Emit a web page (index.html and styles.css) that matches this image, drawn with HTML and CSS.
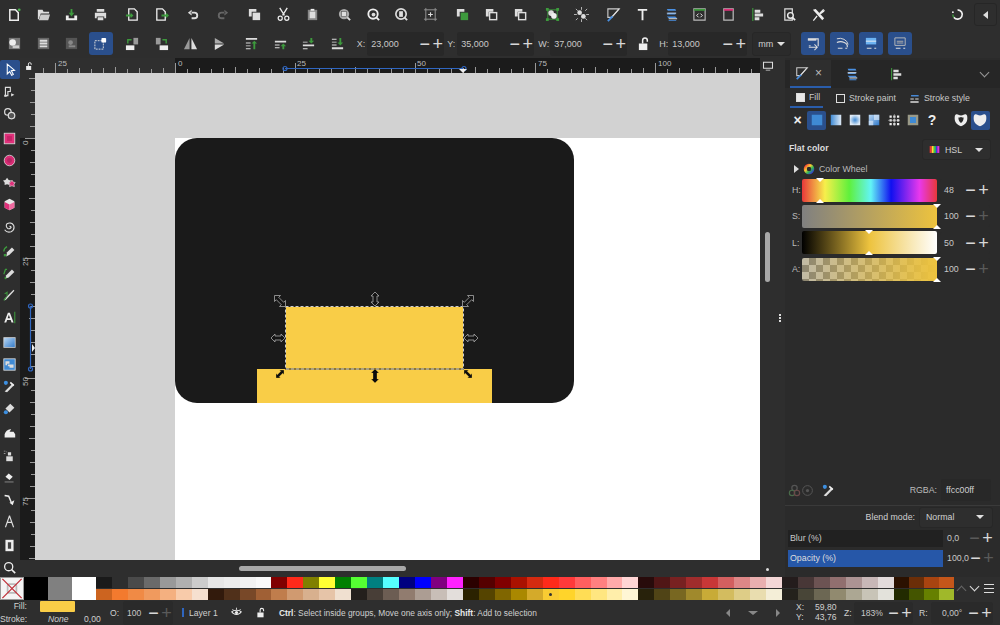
FILE: index.html
```html
<!DOCTYPE html>
<html lang="en">
<head>
<meta charset="utf-8">
<title>Inkscape</title>
<link rel="stylesheet" href="styles.css">
</head>
<body>
<svg class="sprite" width="0" height="0">
<defs>
<symbol id="new" viewBox="0 0 16 16"><path d="M3 3h6l3 3v8H3z" fill="none" stroke="#eee" stroke-width="1.6"/><circle cx="13" cy="3" r="1.5" fill="#4caf50"/></symbol>
<symbol id="open" viewBox="0 0 16 16"><path d="M2 3h5l1 2h6v2H5L3 13H2z" fill="#ddd"/><path d="M5 8h10l-2 6H3z" fill="#ccc"/></symbol>
<symbol id="save" viewBox="0 0 16 16"><path d="M2 9h3v3h6V9h3v5H2z" fill="#eee"/><path d="M7 2h2v4h2L8 10 5 6h2z" fill="#3d9a3d"/></symbol>
<symbol id="print" viewBox="0 0 16 16"><path d="M4 2h8v3H4zM2 6h12v6h-2v-2H4v2H2zM5 11h6v3H5z" fill="#ddd"/></symbol>
<symbol id="import" viewBox="0 0 16 16"><path d="M4 2h6l3 3v9H4z" fill="none" stroke="#eee" stroke-width="1.4"/><path d="M1 8h5V6l3 3-3 3v-2H1z" fill="#3d9a3d"/></symbol>
<symbol id="export" viewBox="0 0 16 16"><path d="M3 2h6l3 3v9H3z" fill="none" stroke="#eee" stroke-width="1.4"/><path d="M8 8h5V6l3 3-3 3v-2H8z" fill="#3d9a3d"/></symbol>
<symbol id="undo" viewBox="0 0 16 16"><path d="M6 3 2 6l4 3zM5 5h4a3.500 3.500 0 0 1 0 8H6v-2h3a1.500 1.500 0 0 0 0-4H5z" fill="#ddd"/></symbol>
<symbol id="redo" viewBox="0 0 16 16"><path d="M10 3l4 3-4 3zM11 5H7a3.500 3.500 0 0 0 0 8h3v-2H7a1.500 1.500 0 0 1 0-4h4z" fill="#666"/></symbol>
<symbol id="copy" viewBox="0 0 16 16"><path d="M2 2h8v3H5v5H2z" fill="#ddd"/><rect x="6" y="6" width="8" height="8" fill="#ddd"/></symbol>
<symbol id="cut" viewBox="0 0 16 16"><path d="M4 1l5 8M12 1 7 9" stroke="#eee" stroke-width="1.4" fill="none"/><circle cx="4.500" cy="12" r="2.200" fill="none" stroke="#eee" stroke-width="1.3"/><circle cx="11.500" cy="12" r="2.200" fill="none" stroke="#eee" stroke-width="1.3"/></symbol>
<symbol id="paste" viewBox="0 0 16 16"><path d="M3 3h10v11H3z" fill="#888"/><path d="M6 2h4v2H6z" fill="#eee"/><path d="M5 5h6v7H5z" fill="#ddd"/></symbol>
<symbol id="zoomsel" viewBox="0 0 16 16"><circle cx="7.500" cy="7.500" r="5.500" fill="#aaa"/><rect x="5" y="5" width="5" height="5" fill="#ddd" stroke="#555" stroke-width=".6"/><path d="M11 11l3 3" stroke="#ddd" stroke-width="2"/></symbol>
<symbol id="zoomdraw" viewBox="0 0 16 16"><circle cx="7.500" cy="7.500" r="5" fill="none" stroke="#eee" stroke-width="2"/><path d="M11 11l3 3" stroke="#eee" stroke-width="2"/><circle cx="8" cy="8" r="2" fill="#ddd"/></symbol>
<symbol id="zoompage" viewBox="0 0 16 16"><circle cx="7.500" cy="7.500" r="5.500" fill="none" stroke="#ddd" stroke-width="1.800"/><rect x="5.500" y="4.500" width="4" height="6" fill="#ddd"/><path d="M11 11l3 3" stroke="#ddd" stroke-width="2"/></symbol>
<symbol id="center" viewBox="0 0 16 16"><path d="M3 3h10v10H3z" fill="none" stroke="#999" stroke-width="1"/><path d="M8 5.500v5M5.500 8h5" stroke="#ddd" stroke-width="1.200"/><path d="M1 3h2M3 1v2M13 1v2M15 3h-2M1 13h2M3 15v-2M15 13h-2M13 15v-2" stroke="#aaa" stroke-width=".8"/></symbol>
<symbol id="dup" viewBox="0 0 16 16"><path d="M2 2h8v3H5v5H2z" fill="#ddd"/><rect x="6" y="6" width="8" height="8" fill="#3d9a3d"/></symbol>
<symbol id="clone" viewBox="0 0 16 16"><path d="M2 2h8v3H5v5H2z" fill="#ddd"/><rect x="6" y="6" width="7.500" height="7.500" fill="none" stroke="#ddd" stroke-width="1.500"/></symbol>
<symbol id="group" viewBox="0 0 16 16"><path d="M3 3h10v10H3z" fill="none" stroke="#3d9a3d" stroke-width="1"/><circle cx="6.500" cy="6.500" r="3" fill="#ddd"/><circle cx="9.500" cy="9.500" r="3" fill="#eee"/><path d="M1 1h3v3H1zM12 1h3v3h-3zM1 12h3v3H1zM12 12h3v3h-3z" fill="#3d9a3d"/></symbol>
<symbol id="ungroup" viewBox="0 0 16 16"><circle cx="6" cy="6" r="2.500" fill="#ddd"/><circle cx="10" cy="10" r="2.500" fill="#ddd"/><path d="M8 0v3M8 13v3M0 8h3M13 8h3M2 2l2 2M14 2l-2 2M2 14l2-2M14 14l-2-2" stroke="#bbb" stroke-width="1"/></symbol>
<symbol id="fillstroke" viewBox="0 0 16 16"><path d="M2 2h12l-1 1-7 8H2z" fill="none" stroke="#ccc" stroke-width="1.200"/><path d="M6 11 14 2" stroke="#ddd" stroke-width="1.200"/><path d="M2 15l5-5" stroke="#4a90e2" stroke-width="2"/></symbol>
<symbol id="text" viewBox="0 0 16 16"><path d="M3 2h10v2H9v10H7V4H3z" fill="#eee"/></symbol>
<symbol id="layers" viewBox="0 0 16 16"><path d="M3 2h9l1 2H4zM4 6h9l-1 2H3zM3 10h9l2 2H5zM5 14h8v1H5z" fill="#4a90e2"/><path d="M3 6h10v1H3zM5 12h9v1H5z" fill="#ddd"/></symbol>
<symbol id="xml" viewBox="0 0 16 16"><path d="M2 2h12v12H2z" fill="none" stroke="#bbb" stroke-width="1.200"/><path d="M2 2h12v2H2z" fill="#3d9a3d"/><path d="M7 7 5 9l2 2M9 7l2 2-2 2" fill="none" stroke="#eee" stroke-width="1"/></symbol>
<symbol id="docprop" viewBox="0 0 16 16"><path d="M3 2h10v12H3z" fill="none" stroke="#bbb" stroke-width="1.300"/><path d="M3 2h10v2H3z" fill="#e0307a"/></symbol>
<symbol id="align" viewBox="0 0 16 16"><path d="M3 1v14" stroke="#3d9a3d" stroke-width="1.200"/><path d="M5 3h6v3H5zM5 7h9v3H5zM5 11h5v3H5z" fill="#ddd"/></symbol>
<symbol id="search" viewBox="0 0 16 16"><path d="M3 2h8v12H3z" fill="none" stroke="#ddd" stroke-width="1.300"/><circle cx="9" cy="9" r="3" fill="#333" stroke="#eee" stroke-width="1.500"/><path d="M11 11l3 3" stroke="#eee" stroke-width="1.800"/></symbol>
<symbol id="prefs" viewBox="0 0 16 16"><path d="M2 3l3-1 9 10-2 2zM14 3l-1-1-4 4 1 2 4-3 1-2-2 1zM2 14l4-5 1 1-4 5z" fill="#eee"/></symbol>
<symbol id="sync" viewBox="0 0 16 16"><path d="M7 3a5 5 0 1 1-4 8" fill="none" stroke="#eee" stroke-width="1.800"/><path d="M3 11a5 5 0 0 1-1-3" fill="none" stroke="#3d9a3d" stroke-width="1.500"/><circle cx="2" cy="5.500" r="1" fill="#eee"/></symbol>
<symbol id="selall" viewBox="0 0 16 16"><rect x="2" y="2" width="12" height="12" fill="#777"/><circle cx="6" cy="7" r="3.500" fill="#eee"/><path d="M6 10h7v3H6z" fill="#ccc"/></symbol>
<symbol id="sellayers" viewBox="0 0 16 16"><rect x="2" y="2" width="12" height="12" fill="#666"/><path d="M4 4h8v2H4zM4 7h8v2H4zM4 10h8v2H4z" fill="#ddd"/></symbol>
<symbol id="desel" viewBox="0 0 16 16"><rect x="2" y="2" width="12" height="12" fill="#555"/><circle cx="7" cy="7" r="2.500" fill="#888"/><path d="M5 10h7v2H5z" fill="#888"/></symbol>
<symbol id="tf" viewBox="0 0 16 16"><path d="M2 5h9v9H2z" fill="none" stroke="#ddd" stroke-width="1" stroke-dasharray="2 1"/><rect x="9" y="2" width="5" height="5" rx="1" fill="#fff"/></symbol>
<symbol id="rotl" viewBox="0 0 16 16"><rect x="1" y="10" width="9" height="5" fill="#eee"/><rect x="9" y="2" width="5" height="7" fill="#999"/><path d="M7 4H3v4" stroke="#3d9a3d" stroke-width="1.500" fill="none"/></symbol>
<symbol id="rotr" viewBox="0 0 16 16"><rect x="6" y="10" width="9" height="5" fill="#eee"/><rect x="2" y="2" width="5" height="7" fill="#999"/><path d="M9 4h4v4" stroke="#3d9a3d" stroke-width="1.500" fill="none"/></symbol>
<symbol id="fliph" viewBox="0 0 16 16"><path d="M7 2v12H1z" fill="#999"/><path d="M9 2v12h6z" fill="#ddd"/></symbol>
<symbol id="flipv" viewBox="0 0 16 16"><path d="M3 2l10 6H3z" fill="#aaa"/><path d="M3 9h10L3 15z" fill="#ddd"/></symbol>
<symbol id="top" viewBox="0 0 16 16"><path d="M2 2h12v2H2zM2 7h5v1H2zM2 10h5v1H2zM2 13h5v1H2z" fill="#ddd"/><path d="M11 5l3 3h-2v6h-2V8H8z" fill="#3d9a3d"/></symbol>
<symbol id="up" viewBox="0 0 16 16"><path d="M2 5h12v2H2zM2 9h5v1H2zM2 12h5v1H2z" fill="#ddd"/><path d="M11 8l3 3h-2v3h-2v-3H8z" fill="#3d9a3d"/></symbol>
<symbol id="down" viewBox="0 0 16 16"><path d="M2 9h12v2H2zM2 6h5v1H2zM2 13h5v1H2z" fill="#ddd"/><path d="M10 2h2v3h2l-3 3-3-3h2z" fill="#3d9a3d"/></symbol>
<symbol id="bottom" viewBox="0 0 16 16"><path d="M2 12h12v2H2zM2 3h5v1H2zM2 6h5v1H2zM2 9h5v1H2z" fill="#ddd"/><path d="M10 2h2v5h2l-3 3-3-3h2z" fill="#3d9a3d"/></symbol>
<symbol id="strokestyle" viewBox="0 0 16 16"><path d="M3 3h11v2H3z" fill="#4a90e2"/><path d="M2 8h5v1.500H2zM9 8h5v1.500H9zM2 12h12v2H2z" fill="#ddd"/></symbol>
<symbol id="lockopen" viewBox="0 0 16 16"><rect x="2" y="8" width="9" height="7" fill="#eee"/><path d="M6 8V4.500a2.500 2.500 0 0 1 5 0V6" fill="none" stroke="#eee" stroke-width="1.600"/></symbol>
<symbol id="opt" viewBox="0 0 16 16"><path d="M2 3h11v8" fill="none" stroke="#ddd" stroke-width="1.200"/><path d="M2 3h9v2H2z" fill="#ddd"/><path d="M3 12h9M9 9l3 3-3 3" fill="none" stroke="#ddd" stroke-width="1.100"/><path d="M3 10h2v1H3z" fill="#ddd"/></symbol>
<symbol id="opt2" viewBox="0 0 16 16"><path d="M2 7a7 5 0 0 1 11 5" fill="none" stroke="#ddd" stroke-width="1.200"/><path d="M2 3a9 8 0 0 1 12 6" fill="none" stroke="#ddd" stroke-width="1"/><path d="M3 13h5M11 13h2" stroke="#ddd" stroke-width="1.200"/></symbol>
<symbol id="opt3" viewBox="0 0 16 16"><path d="M2 2h11v7H2z" fill="#6db3f2"/><path d="M2 5h11v1H2z" fill="#eee"/><path d="M3 13h5M11 13h2" stroke="#ddd" stroke-width="1.200"/></symbol>
<symbol id="opt4" viewBox="0 0 16 16"><path d="M2 2h11v8H2z" fill="none" stroke="#bbb"/><path d="M4 5h7v1H4zM4 7h7v1H4z" fill="#aaa"/><path d="M3 13h5M11 13h2" stroke="#ddd" stroke-width="1.200"/></symbol>
<symbol id="arrow" viewBox="0 0 16 16"><path d="M4 1.500 13 9l-4 .5L11.500 14l-2 1.200L7 10.500 4 13.500z" fill="#2a5aa0" stroke="#fff" stroke-width="1.300"/></symbol>
<symbol id="node" viewBox="0 0 16 16"><path d="M3 3h6v5H6v5H3z" fill="none" stroke="#ddd" stroke-width="1.400"/><path d="M10 10l4 2-4 2z" fill="#ddd"/><rect x="1.500" y="12" width="3" height="2.500" fill="#ddd"/></symbol>
<symbol id="builder" viewBox="0 0 16 16"><circle cx="6" cy="6" r="4" fill="none" stroke="#ddd" stroke-width="1.500"/><circle cx="10.500" cy="10.500" r="4" fill="#555" stroke="#ddd" stroke-width="1.500"/></symbol>
<symbol id="rect" viewBox="0 0 16 16"><rect x="1.500" y="1.500" width="13" height="13" fill="#e0307a" stroke="#ddd"/><rect x="5" y="5" width="6" height="6" fill="#c52368"/></symbol>
<symbol id="ellipse" viewBox="0 0 16 16"><circle cx="8" cy="8" r="6.500" fill="#d82c74" stroke="#ddd"/><circle cx="8" cy="8" r="3" fill="#b72463"/></symbol>
<symbol id="star" viewBox="0 0 16 16"><path d="M5 2l2 3 3 .5L8 8v3L5 10l-3 1v-3L0 5.500 3 5z" fill="#ddd"/><path d="M11 5l1.500 2.500 2.500.5-1.500 2 .5 3-3-1-3 1 .5-3L7 8l2.500-.5z" fill="#e0307a" stroke="#ddd" stroke-width=".8"/></symbol>
<symbol id="box" viewBox="0 0 16 16"><path d="M8 1l6 3v8l-6 3-6-3V4z" fill="#e8e8e8"/><path d="M8 8v7l-6-3V5z" fill="#e0307a"/><path d="M8 8v7l6-3V5z" fill="#f06aa0"/></symbol>
<symbol id="spiral" viewBox="0 0 16 16"><path d="M8 8a1.500 1.500 0 0 1 2 1 3 3 0 0 1-4 1.500A4 4 0 0 1 5 4.500a6 6 0 0 1 8 2 6.500 6.500 0 0 1-3 8A7 7 0 0 1 2 12" fill="none" stroke="#ddd" stroke-width="1.400"/></symbol>
<symbol id="pen" viewBox="0 0 16 16"><path d="M1 8c0-4 2-5 4-6" fill="none" stroke="#3d9a3d" stroke-width="1.500"/><path d="M4 14l1-5 6-6 3 3-6 6z" fill="#ddd"/><path d="M1 11h3v3H1z" fill="#3d9a3d"/></symbol>
<symbol id="pencil" viewBox="0 0 16 16"><path d="M1 9l2-6h2" fill="none" stroke="#3d9a3d" stroke-width="1.500"/><path d="M3 14l1-4 7-7 3 3-7 7z" fill="#ddd"/><path d="M2 12h2v3H2z" fill="#3d9a3d"/></symbol>
<symbol id="callig" viewBox="0 0 16 16"><path d="M2 14l2-1L14 2l-1-1L2 12z" fill="#ddd"/><path d="M2 6l3-2v5M1 14l3-4" fill="none" stroke="#3d9a3d" stroke-width="1.300"/></symbol>
<symbol id="texta" viewBox="0 0 16 16"><path d="M6 2h2.500L13 14h-2.500l-1-3H5l-1 3H1.500zM5.700 9h3L7.200 4.500z" fill="#eee"/><path d="M14.500 1v14" stroke="#3d9a3d" stroke-width="1.300"/></symbol>
<symbol id="grad" viewBox="0 0 16 16"><rect x="1" y="2" width="14" height="12" fill="url(#gradfill)" stroke="#ccc"/></symbol>
<linearGradient id="gradfill" x2="1" y2="1"><stop offset="0" stop-color="#bcd9f5"/><stop offset="1" stop-color="#2f78c8"/></linearGradient>
<symbol id="mesh" viewBox="0 0 16 16"><rect x="1" y="1" width="14" height="14" fill="#3f8ad4" stroke="#ddd"/><path d="M3 4h5v3H5v2H3zM8 8h5v4H8V10H6V8z" fill="#ddd"/></symbol>
<symbol id="dropper" viewBox="0 0 16 16"><circle cx="3.500" cy="3.500" r="2.500" fill="#3d8fe0"/><path d="M2 14l8-8 2-2 2 2-2 2-7 7z" fill="#ddd"/><path d="M9 3l4 4" stroke="#eee" stroke-width="2"/></symbol>
<symbol id="bucket" viewBox="0 0 16 16"><path d="M9 2l5 5-6 6-5-5z" fill="#ddd"/><circle cx="3.500" cy="12.500" r="2.500" fill="#3d8fe0"/></symbol>
<symbol id="tweak" viewBox="0 0 16 16"><path d="M2 14V10c2-5 5-6 8-6l-2 3h5l2 3v4z" fill="#eee"/></symbol>
<symbol id="spray" viewBox="0 0 16 16"><path d="M4 9h8v6H4z" fill="#ddd"/><path d="M6 4h4v4H6z" fill="#ddd"/><path d="M1 2h2v1H1zM1 5h2v1H1zM4 3h1v1H4z" fill="#999"/></symbol>
<symbol id="eraser" viewBox="0 0 16 16"><path d="M7 3l5 4-4 4-5-4z" fill="#eee"/><path d="M2 13h11v1H2z" fill="#999"/></symbol>
<symbol id="connector" viewBox="0 0 16 16"><path d="M2 3l5 1 3 7" fill="none" stroke="#eee" stroke-width="1.800"/><path d="M8 12l6-3-2 6z" fill="#eee"/></symbol>
<symbol id="measure" viewBox="0 0 16 16"><path d="M8 1 3 15M8 1l5 14M5 9h6" fill="none" stroke="#ddd" stroke-width="1.400"/></symbol>
<symbol id="pages" viewBox="0 0 16 16"><path d="M3 1h10v14H3z" fill="#eee"/><path d="M6 4h4v8H6z" fill="#444"/></symbol>
<symbol id="mag" viewBox="0 0 16 16"><circle cx="7" cy="7" r="5" fill="none" stroke="#eee" stroke-width="1.600"/><path d="M10.500 10.500 15 15" stroke="#eee" stroke-width="2"/></symbol>
<symbol id="monitor" viewBox="0 0 16 16"><path d="M2 3h12v8H2z" fill="none" stroke="#ddd" stroke-width="1.400"/><path d="M5 13h6v1H5z" fill="#ddd"/></symbol>
<symbol id="eye" viewBox="0 0 16 16"><path d="M1 7c3-3 11-3 14 0-3 5-11 5-14 0z" fill="none" stroke="#eee" stroke-width="1.500"/><circle cx="8" cy="8" r="2.300" fill="#eee"/><path d="M2 3l2 2M14 3l-2 2M8 1v3" stroke="#eee" stroke-width="1.200"/></symbol>
<symbol id="fl" viewBox="0 0 16 16"><rect x="1" y="1" width="14" height="14" fill="#3f8ad4"/></symbol>
<symbol id="lin" viewBox="0 0 16 16"><rect x="1" y="1" width="14" height="14" fill="url(#linfill)"/></symbol>
<linearGradient id="linfill"><stop offset="0" stop-color="#3f8ad4"/><stop offset="1" stop-color="#dfeaf5"/></linearGradient>
<symbol id="rad" viewBox="0 0 16 16"><rect x="1" y="1" width="14" height="14" fill="url(#radfill)"/></symbol>
<radialGradient id="radfill"><stop offset="0" stop-color="#3f8ad4"/><stop offset="1" stop-color="#dfeaf5"/></radialGradient>
<symbol id="meshp" viewBox="0 0 16 16"><rect x="1" y="1" width="14" height="14" fill="url(#gradfill)"/><path d="M1 9h6v6H1zM8 1h7v7H8z" fill="#eaf2fa" opacity=".6"/></symbol>
<symbol id="pat" viewBox="0 0 16 16"><path d="M2 2v3h3V2zM7 2v3h3V2zM12 2v3h3V2zM2 7v3h3V7zM7 7v3h3V7zM12 7v3h3V7zM2 12v3h3v-3zM7 12v3h3v-3zM12 12v3h3v-3z" fill="#eee"/><path d="M0 8.500h16M8.500 0v16" stroke="#bbb" stroke-width=".7"/></symbol>
<symbol id="swatchp" viewBox="0 0 16 16"><rect x="1" y="1" width="14" height="14" fill="#998"/><rect x="4" y="4" width="8" height="8" fill="#3f8ad4"/></symbol>
<symbol id="evenodd" viewBox="0 0 16 16"><path d="M1 3c1-2 3-2 4-1 2 1 4 1 6 0 1-1 3-1 4 1 1 6-1 10-7 12C2 13 0 9 1 3zM8 4.500c-1 .5-2 .5-3 .5 0 3 1 5 3 6.500 2-1.500 3-3.500 3-6.500-1 0-2 0-3-.5z" fill="#eee" fill-rule="evenodd"/></symbol>
<symbol id="nonzero" viewBox="0 0 16 16"><path d="M1 3c1-2 3-2 4-1 2 1 4 1 6 0 1-1 3-1 4 1 1 6-1 10-7 12C2 13 0 9 1 3z" fill="#eee"/></symbol>
<symbol id="wheel" viewBox="0 0 16 16"><circle cx="8" cy="8" r="5" fill="none" stroke="url(#wheelfill)" stroke-width="4"/></symbol>
<linearGradient id="wheelfill" x2="1" y2="1"><stop offset="0" stop-color="#e33"/><stop offset=".35" stop-color="#fc3"/><stop offset=".65" stop-color="#3b5"/><stop offset="1" stop-color="#33d"/></linearGradient>
<symbol id="hslicon" viewBox="0 0 16 16"><path d="M1 3h3v10H1z" fill="#e33"/><path d="M4 3h3v10H4z" fill="#fd3"/><path d="M7 3h3v10H7z" fill="#3c5"/><path d="M10 3h2v10h-2z" fill="#33e"/><path d="M12 3h3v10h-3z" fill="#d3d"/></symbol>
<symbol id="cms" viewBox="0 0 16 16"><circle cx="8" cy="5" r="3.300" fill="none" stroke="#555" stroke-width="1.500"/><circle cx="5" cy="11" r="3.300" fill="none" stroke="#4a6a4a" stroke-width="1.500"/><circle cx="11" cy="11" r="3.300" fill="none" stroke="#6a4a4a" stroke-width="1.500"/></symbol>
<symbol id="gamut" viewBox="0 0 16 16"><circle cx="8" cy="8" r="6" fill="none" stroke="#555" stroke-width="1.200"/><circle cx="8" cy="8" r="2" fill="#555"/></symbol>
</defs>
</svg>

<div class="app">
  <div class="bar cmd-bar">
    <div class="ic"><svg><use href="#new"/></svg></div>
    <div class="ic"><svg><use href="#open"/></svg></div>
    <div class="ic"><svg><use href="#save"/></svg></div>
    <div class="ic"><svg><use href="#print"/></svg></div>
    <div class="ic gap"><svg><use href="#import"/></svg></div>
    <div class="ic"><svg><use href="#export"/></svg></div>
    <div class="ic gap"><svg><use href="#undo"/></svg></div>
    <div class="ic"><svg><use href="#redo"/></svg></div>
    <div class="ic gap"><svg><use href="#copy"/></svg></div>
    <div class="ic"><svg><use href="#cut"/></svg></div>
    <div class="ic"><svg><use href="#paste"/></svg></div>
    <div class="ic gap"><svg><use href="#zoomsel"/></svg></div>
    <div class="ic"><svg><use href="#zoomdraw"/></svg></div>
    <div class="ic"><svg><use href="#zoompage"/></svg></div>
    <div class="ic"><svg><use href="#center"/></svg></div>
    <div class="ic gap"><svg><use href="#dup"/></svg></div>
    <div class="ic"><svg><use href="#clone"/></svg></div>
    <div class="ic"><svg><use href="#clone"/></svg></div>
    <div class="ic gap"><svg><use href="#group"/></svg></div>
    <div class="ic"><svg><use href="#ungroup"/></svg></div>
    <div class="ic gap"><svg><use href="#fillstroke"/></svg></div>
    <div class="ic"><svg><use href="#text"/></svg></div>
    <div class="ic"><svg><use href="#layers"/></svg></div>
    <div class="ic"><svg><use href="#xml"/></svg></div>
    <div class="ic"><svg><use href="#docprop"/></svg></div>
    <div class="ic"><svg><use href="#align"/></svg></div>
    <div class="ic gap"><svg><use href="#search"/></svg></div>
    <div class="ic"><svg><use href="#prefs"/></svg></div>
    <div class="cmd-end">
      <div class="ic"><svg><use href="#sync"/></svg></div>
      <div class="collapse"><span class="tri-left"></span></div>
    </div>
  </div>

  <div class="bar tool-bar">
    <div class="ic"><svg><use href="#selall"/></svg></div>
    <div class="ic"><svg><use href="#sellayers"/></svg></div>
    <div class="ic"><svg><use href="#desel"/></svg></div>
    <div class="ic active"><svg><use href="#tf"/></svg></div>
    <div class="ic gap"><svg><use href="#rotl"/></svg></div>
    <div class="ic"><svg><use href="#rotr"/></svg></div>
    <div class="ic"><svg><use href="#fliph"/></svg></div>
    <div class="ic"><svg><use href="#flipv"/></svg></div>
    <div class="ic gap"><svg><use href="#top"/></svg></div>
    <div class="ic"><svg><use href="#up"/></svg></div>
    <div class="ic"><svg><use href="#down"/></svg></div>
    <div class="ic"><svg><use href="#bottom"/></svg></div>
    <label class="coord cx">X:</label>
    <div class="spin"><span class="val">23,000</span><span class="pm">−</span><span class="pm">+</span></div>
    <label class="coord cy">Y:</label>
    <div class="spin"><span class="val">35,000</span><span class="pm">−</span><span class="pm">+</span></div>
    <label class="coord cw">W:</label>
    <div class="spin"><span class="val">37,000</span><span class="pm">−</span><span class="pm">+</span></div>
    <div class="ic lockic"><svg><use href="#lockopen"/></svg></div>
    <label class="coord ch">H:</label>
    <div class="spin wide"><span class="val">13,000</span><span class="pm">−</span><span class="pm">+</span></div>
    <div class="unit">mm<span class="caret"></span></div>
    <div class="opts">
      <div class="opt"><svg><use href="#opt"/></svg></div>
      <div class="opt"><svg><use href="#opt2"/></svg></div>
      <div class="opt"><svg><use href="#opt3"/></svg></div>
      <div class="opt"><svg><use href="#opt4"/></svg></div>
    </div>
  </div>

  <div class="workspace">
    <div class="tools">
      <div class="tl sel"><svg><use href="#arrow"/></svg></div>
      <div class="tl"><svg><use href="#node"/></svg></div>
      <div class="tl"><svg><use href="#builder"/></svg></div>
      <div class="tl g"><svg><use href="#rect"/></svg></div>
      <div class="tl"><svg><use href="#ellipse"/></svg></div>
      <div class="tl"><svg><use href="#star"/></svg></div>
      <div class="tl"><svg><use href="#box"/></svg></div>
      <div class="tl"><svg><use href="#spiral"/></svg></div>
      <div class="tl g"><svg><use href="#pen"/></svg></div>
      <div class="tl"><svg><use href="#pencil"/></svg></div>
      <div class="tl"><svg><use href="#callig"/></svg></div>
      <div class="tl"><svg><use href="#texta"/></svg></div>
      <div class="tl g"><svg><use href="#grad"/></svg></div>
      <div class="tl"><svg><use href="#mesh"/></svg></div>
      <div class="tl"><svg><use href="#dropper"/></svg></div>
      <div class="tl"><svg><use href="#bucket"/></svg></div>
      <div class="tl g"><svg><use href="#tweak"/></svg></div>
      <div class="tl"><svg><use href="#spray"/></svg></div>
      <div class="tl"><svg><use href="#eraser"/></svg></div>
      <div class="tl"><svg><use href="#connector"/></svg></div>
      <div class="tl"><svg><use href="#measure"/></svg></div>
      <div class="tl g"><svg><use href="#pages"/></svg></div>
      <div class="tl"><svg><use href="#mag"/></svg></div>
    </div>

    <div class="canvas-grid">
      <div class="corner"><svg class="corner-lock"><use href="#lockopen"/></svg></div>
      <svg class="ruler-h" viewBox="35 58 725 15">
        <defs>
          <pattern id="tick-h" x="55" y="58" width="120" height="15" patternUnits="userSpaceOnUse">
            <path d="M.5 5v10M12.500 11v4M24.500 10v5M36.500 11v4M48.500 10v5M60.500 9v6M72.500 11v4M84.500 10v5M96.500 11v4M108.500 10v5" stroke="#999"/>
          </pattern>
        </defs>
        <rect x="35" y="58" width="140" height="15" fill="#2f2f2f"/>
        <rect x="175" y="58" width="585" height="15" fill="#1b1b1b"/>
        <rect x="35" y="58" width="725" height="15" fill="url(#tick-h)"/>
        <text class="rl" x="58" y="66">25</text>
        <text class="rl" x="178" y="66">0</text>
        <text class="rl" x="297" y="66">25</text>
        <text class="rl" x="417" y="66">50</text>
        <text class="rl" x="538" y="66">75</text>
        <text class="rl" x="658" y="66">100</text>
        <path d="M285 68.500h178" stroke="#2f66c0" stroke-width="1.200"/>
        <circle cx="285" cy="68.500" r="2" fill="none" stroke="#2f66c0" stroke-width="1.200"/>
        <circle cx="464" cy="68.500" r="2" fill="none" stroke="#2f66c0" stroke-width="1.200"/>
        <path d="M459 69h8l-4 4z" fill="#eee"/>
      </svg>
      <div class="vbar-top"><svg class="monitor"><use href="#monitor"/></svg></div>

      <svg class="ruler-v" viewBox="20 73 15 487">
        <defs>
          <pattern id="tick-v" x="20" y="18" width="15" height="120" patternUnits="userSpaceOnUse">
            <path d="M5 .5h10M11 12.500h4M10 24.500h5M11 36.500h4M10 48.500h5M9 60.500h6M11 72.500h4M10 84.500h5M11 96.500h4M10 108.500h5" stroke="#999"/>
          </pattern>
        </defs>
        <rect x="20" y="73" width="15" height="65" fill="#2f2f2f"/>
        <rect x="20" y="138" width="15" height="422" fill="#1b1b1b"/>
        <rect x="20" y="73" width="15" height="487" fill="url(#tick-v)"/>
        <text class="rl" transform="translate(28 145) rotate(-90)">0</text>
        <text class="rl" transform="translate(28 266) rotate(-90)">25</text>
        <text class="rl" transform="translate(28 386) rotate(-90)">50</text>
        <text class="rl" transform="translate(28 506) rotate(-90)">75</text>
        <path d="M30.500 306v63" stroke="#2f66c0" stroke-width="1.200"/>
        <circle cx="30.500" cy="306" r="2" fill="none" stroke="#2f66c0" stroke-width="1.200"/>
        <circle cx="30.500" cy="369" r="2" fill="none" stroke="#2f66c0" stroke-width="1.200"/>
        <path d="M32 344v8l3-4z" fill="#eee"/>
      </svg>

      <svg class="artboard" viewBox="35 73 725 487">
        <defs>
          <path id="h-diag" d="M-5.500-5.500H.5L-1.300-3.700 3.700 1.300 5.500-.5V5.500H-.5L1.300 3.700-3.700-1.300-5.500 .5z"/>
          <path id="h-v" d="M0-7 4-3H2V3H4L0 7-4 3H-2V-3H-4z"/>
          <path id="h-diag-s" d="M-4-4H.5L-.8-2.700 2.700.8 4-.5V4H-.5L.8 2.700-2.700-.8-4 .5z"/>
        </defs>
        <rect x="35" y="73" width="725" height="487" fill="#d2d2d2"/>
        <rect x="175" y="138" width="585" height="422" fill="#fff"/>
        <rect x="175" y="138" width="399" height="265" rx="22" fill="#1a1a1a"/>
        <path d="M257 369h235v34H257z" fill="#f9cd47"/>
        <rect x="285" y="306" width="178" height="63" fill="#f9cd47"/>
        <rect class="sel-a" x="285.500" y="306.500" width="178" height="62.500"/>
        <rect class="sel-b" x="285.500" y="306.500" width="178" height="62.500"/>
        <g class="hd-dark">
          <use href="#h-diag" transform="translate(280 301)"/>
          <use href="#h-diag" transform="translate(468 301) rotate(90)"/>
          <use href="#h-v" transform="translate(375 299)"/>
          <use href="#h-v" transform="translate(278 338) rotate(90)"/>
          <use href="#h-v" transform="translate(471 338) rotate(90)"/>
        </g>
        <g class="hd-light">
          <use href="#h-diag-s" transform="translate(280 374) rotate(90)"/>
          <use href="#h-diag-s" transform="translate(468 374)"/>
          <use href="#h-v" transform="translate(375 376)"/>
        </g>
      </svg>
      <div class="vscroll"><span class="vthumb"></span></div>

      <div class="hscroll-gap"></div>
      <div class="hscroll"><span class="hthumb"></span></div>
      <div class="hscroll-end"><span class="dot"></span></div>
    </div>

    <div class="splitter"><span></span><span></span><span></span></div>

    <div class="dock">
      <div class="tabs">
        <div class="tab on"><svg><use href="#fillstroke"/></svg><span class="x">×</span></div>
        <div class="tab t2"><svg><use href="#layers"/></svg></div>
        <div class="tab t3"><svg><use href="#align"/></svg></div>
        <div class="chev"></div>
      </div>
      <div class="subtabs">
        <div class="sub on"><i class="chk full"></i>Fill</div>
        <div class="sub"><i class="chk"></i>Stroke paint</div>
        <div class="sub"><svg><use href="#strokestyle"/></svg>Stroke style</div>
      </div>
      <div class="paint">
        <span class="pt cross">×</span>
        <span class="pt on"><svg><use href="#fl"/></svg></span>
        <span class="pt"><svg><use href="#lin"/></svg></span>
        <span class="pt"><svg><use href="#rad"/></svg></span>
        <span class="pt"><svg><use href="#meshp"/></svg></span>
        <span class="pt"><svg><use href="#pat"/></svg></span>
        <span class="pt"><svg><use href="#swatchp"/></svg></span>
        <span class="pt q">?</span>
        <span class="pt r1"><svg><use href="#evenodd"/></svg></span>
        <span class="pt on r2"><svg><use href="#nonzero"/></svg></span>
      </div>
      <div class="flat">
        <b>Flat color</b>
        <div class="hsl"><svg><use href="#hslicon"/></svg>HSL<span class="caret"></span></div>
      </div>
      <div class="wheelrow"><span class="tri-right"></span><svg><use href="#wheel"/></svg>Color Wheel</div>
      <div class="sliders">
        <div class="sl"><label>H:</label><div class="track hue"><i class="m" style="left:18px"></i></div><div class="num"><span class="nv">48</span><span class="pm">−</span><span class="pm">+</span></div></div>
        <div class="sl"><label>S:</label><div class="track sat"><i class="m" style="left:135px"></i></div><div class="num"><span class="nv">100</span><span class="pm">−</span><span class="pm dim">+</span></div></div>
        <div class="sl"><label>L:</label><div class="track lig"><i class="m" style="left:67px"></i></div><div class="num"><span class="nv">50</span><span class="pm">−</span><span class="pm">+</span></div></div>
        <div class="sl"><label>A:</label><div class="track alp"><i class="m" style="left:135px"></i></div><div class="num"><span class="nv">100</span><span class="pm">−</span><span class="pm dim">+</span></div></div>
      </div>
      <div class="spacer"></div>
      <div class="rgba">
        <svg class="s1"><use href="#cms"/></svg>
        <svg class="s1"><use href="#gamut"/></svg>
        <svg class="s2"><use href="#dropper"/></svg>
        <span class="rl-t">RGBA:</span>
        <span class="rgba-f">ffcc00ff</span>
      </div>
      <div class="blend"><span>Blend mode:</span><div class="blend-d">Normal<span class="caret"></span></div></div>
      <div class="meter"><div class="mbar">Blur (%)</div><span class="mv">0,0</span><span class="pm dim">−</span><span class="pm">+</span></div>
      <div class="meter"><div class="mbar blue">Opacity (%)</div><span class="mv">100,0</span><span class="pm">−</span><span class="pm dim">+</span></div>
    </div>
  </div>

  <div class="palette">
    <div class="none-sw"><svg viewBox="0 0 24 24"><rect x="7" y="7" width="10" height="10" rx="2" fill="none" stroke="#bbb" stroke-width="2"/><path d="M1 1 23 23M23 1 1 23" stroke="#c0303a" stroke-width="1.500"/></svg></div>
    <div class="big k"></div><div class="big g5"></div><div class="big w"></div>
    <div class="swatches" id="swatches"></div>
    <div class="pal-ctl"><span class="up-a"></span><span class="down-a"></span><span class="burger"></span></div>
  </div>

  <div class="status">
    <div class="fs">
      <div class="fs-row"><span class="fs-l">Fill:</span><span class="fs-sw"></span></div>
      <div class="fs-row"><span class="fs-l">Stroke:</span><em>None</em><span class="fs-n">0,00</span></div>
    </div>
    <span class="o-l">O:</span>
    <div class="o-f"><span class="nv">100</span><span class="pm">−</span><span class="pm dim">+</span></div>
    <span class="layerbar"></span><span class="layer">Layer 1</span>
    <svg class="st-ic eye"><use href="#eye"/></svg>
    <svg class="st-ic lk"><use href="#lockopen"/></svg>
    <div class="msg"><b>Ctrl</b>: Select inside groups, Move one axis only; <b>Shift</b>: Add to selection</div>
    <div class="nav"><span class="nl"></span><span class="nd"></span><span class="nr"></span></div>
    <div class="xy"><span>X:</span><span>59,80</span><span>Y:</span><span>43,76</span></div>
    <span class="z-l">Z:</span>
    <div class="z-f"><span class="nv">183%</span><span class="pm">−</span><span class="pm">+</span></div>
    <span class="r-l">R:</span>
    <div class="r-f"><span class="nv">0,00°</span><span class="pm">−</span><span class="pm">+</span></div>
  </div>
</div>
<script src="script.js"></script>
</body>
</html>
```

FILE: styles.css
```css
* { box-sizing: border-box; }
html, body { margin: 0; height: 100%; overflow: hidden; }
body { font-family: "Liberation Sans", Arial, sans-serif; font-size: 8.8px; color: #d0d0d0; background: #2e2e2e; }
.sprite { position: absolute; }
svg { display: block; }
.app { width: 1000px; height: 625px; display: flex; flex-direction: column; background: #2e2e2e; }

.bar { display: flex; align-items: center; height: 29px; flex: none; }
.ic { width: 28.8px; height: 24px; display: flex; align-items: center; justify-content: center; flex: none; border-radius: 3px; }
.ic svg { width: 15px; height: 15px; }
.ic.gap { margin-left: 3.3px; }
.ic.active { background: #2a4f8c; width: 24px; margin: 0 2.4px; height: 23px; }
.cmd-end { margin-left: auto; display: flex; align-items: center; padding-right: 3px; }
.cmd-end .ic { width: 24px; margin-right: 4px; }
.collapse { width: 23px; height: 23px; border: 1px solid #262626; border-radius: 3px; display: flex; align-items: center; justify-content: center; }
.tri-left { border: 4px solid transparent; border-right: 5px solid #ddd; border-left: 0; }
.tri-right { border: 4px solid transparent; border-left: 5px solid #ddd; border-right: 0; }

.coord { text-align: right; padding-right: 2px; flex: none; color: #c8c8c8; font-size: 9px; }
.cx { width: 15px; }
.cy { width: 13px; }
.cw { width: 16px; padding-right: 1px; }
.ch { width: 12px; padding-right: 0; }
.spin { width: 77px; height: 24px; background: #282828; border-radius: 3px; display: flex; align-items: center; padding-left: 4px; flex: none; font-size: 9px; }
.spin.wide { width: 79px; }
.val { flex: 1; color: #c8c8c8; }
.pm { width: 13px; text-align: center; font-size: 18px; line-height: 1; color: #d8d8d8; flex: none; }
.pm.dim { color: #5a5a5a; }
.lockic { width: 24px; margin-left: 5px; }
.unit { width: 39px; height: 24px; margin-left: 5px; background: #2b2b2b; border: 1px solid #272727; border-radius: 3px; display: flex; align-items: center; justify-content: center; gap: 4px; flex: none; font-size: 9px; }
.caret { display: inline-block; border: 4px solid transparent; border-top: 4px solid #e0e0e0; border-bottom: 0; }
.opts { display: flex; gap: 5px; margin-left: 10px; }
.opt { width: 24px; height: 23px; background: #2a4f8c; border-radius: 3px; display: flex; align-items: center; justify-content: center; }
.opt svg { width: 15px; height: 15px; }

.workspace { flex: 1; display: flex; min-height: 0; }
.tools { width: 20px; flex: none; padding: 1px 2px 0 0; }
.tl { height: 22.05px; display: flex; align-items: center; justify-content: center; }
.tl svg { width: 13px; height: 13px; }
.tl.g { margin-top: 2.7px; }
.tl.sel { background: #2a4f8c; height: 19px; margin-bottom: 1.5px; margin-top: 1px; border-radius: 2px; width: 20px; }

.canvas-grid { width: 755px; flex: none; display: grid; grid-template-columns: 15px 725px 15px; grid-template-rows: 15px 487px 17px; }
.corner { background: #2f2f2f; display: flex; align-items: center; justify-content: center; padding-left: 4px; }
.corner-lock { width: 9px; height: 10px; }
.ruler-h, .ruler-v, .artboard { width: 100%; height: 100%; }
.rl { font-family: "Liberation Sans", Arial, sans-serif; font-size: 8px; fill: #bbb; }
.vbar-top { display: flex; align-items: center; justify-content: center; }
.monitor { width: 12px; height: 12px; }
.sel-a { fill: none; stroke: #222; stroke-width: 1; }
.sel-b { fill: none; stroke: #ccc; stroke-width: 1; stroke-dasharray: 3 2; }
.hd-dark use { fill: #151515; stroke: #a8a8a8; stroke-width: .8; }
.hd-light use { fill: #0c0c0c; stroke: #f9cd47; stroke-width: .3; }
.vscroll { background: #2e2e2e; display: flex; justify-content: center; padding-top: 159px; }
.vthumb { width: 5px; height: 50px; background: #a8a8a8; border-radius: 3px; }
.hscroll-gap { background: #2e2e2e; }
.hscroll { padding: 6px 0 0 204px; }
.hthumb { display: block; width: 167px; height: 5px; background: #a8a8a8; border-radius: 3px; }
.hscroll-end { display: flex; justify-content: center; padding-top: 8px; }
.dot { width: 3px; height: 3px; background: #ddd; border-radius: 50%; }

.splitter { width: 10px; flex: none; display: flex; flex-direction: column; align-items: center; justify-content: center; gap: 1px; height: 519px; }
.splitter span { width: 2px; height: 2px; background: #ddd; }

.dock { width: 215px; flex: none; display: flex; flex-direction: column; background: #2b2b2b; padding: 2px 0 9px; }
.tabs { height: 28px; display: flex; align-items: center; flex: none; background: #262626; }
.tabs svg { width: 14px; height: 14px; }
.tab { display: flex; align-items: center; height: 28px; }
.tab.on { width: 41px; margin-left: 5px; padding-left: 5px; gap: 6px; border-bottom: 2px solid #2a5dab; background: #2e2e2e; }
.x { font-size: 12px; color: #bbb; }
.t2 { margin-left: 14px; }
.t3 { margin-left: 30px; }
.chev { width: 7px; height: 7px; border-right: 1.2px solid #999; border-bottom: 1.2px solid #999; transform: rotate(45deg); margin-left: auto; margin-right: 12px; margin-top: -3px; }
.subtabs { display: flex; height: 20px; flex: none; padding-left: 5px; gap: 13px; align-items: center; }
.sub { display: flex; align-items: center; gap: 4px; height: 20px; color: #c8c8c8; white-space: nowrap; }
.sub.on { border-bottom: 2px solid #2a5dab; width: 33px; padding-left: 6px; }
.sub svg { width: 11px; height: 11px; }
.chk { width: 9px; height: 9px; border: 1px solid #ddd; display: block; flex: none; }
.chk.full { background: #e8e8e8; }
.paint { display: flex; align-items: center; height: 22px; padding-left: 3px; margin-top: 1px; flex: none; }
.pt { width: 19.2px; height: 19px; display: flex; align-items: center; justify-content: center; flex: none; border-radius: 2px; }
.pt svg { width: 12px; height: 12px; }
.pt.r1 svg, .pt.r2 svg { width: 14px; height: 14px; }
.pt.on { background: #2a4f8c; }
.cross { font-size: 14px; font-weight: bold; color: #eee; }
.q { font-size: 14px; font-weight: bold; color: #eee; }
.r1 { margin-left: 10px; }
.flat { display: flex; align-items: center; justify-content: space-between; padding: 0 9px 0 4px; height: 21px; margin-top: 8px; flex: none; }
.flat b { color: #ddd; margin-bottom: 3px; }
.hsl { width: 69px; height: 21px; background: #2e2e2e; border: 1px solid #272727; border-radius: 3px; display: flex; align-items: center; padding-left: 6px; gap: 5px; }
.hsl svg { width: 11px; height: 11px; }
.hsl .caret { margin-left: 8px; }
.wheelrow { display: flex; align-items: center; height: 14px; padding-left: 9px; margin-top: 2px; margin-bottom: 1px; flex: none; color: #bbb; }
.wheelrow svg { width: 12px; height: 12px; margin: 0 4px 0 4px; }
.sliders { display: flex; flex-direction: column; flex: none; }
.sl { display: flex; align-items: center; height: 26.3px; padding-left: 7px; }
.sl label { width: 10px; color: #bbb; }
.track { position: relative; width: 135px; height: 23px; border-radius: 2px; flex: none; }
.hue { background: linear-gradient(90deg, #e8383a 0%, #f7ef4b 17%, #5ff03c 35%, #62f4f6 51%, #1010f0 66%, #e838ec 87%, #e8383a 100%); }
.sat { background: linear-gradient(90deg, #808080, #edc33e); }
.lig { background: linear-gradient(90deg, #000 0%, #edc33e 50%, #fff 100%); }
.alp { background: linear-gradient(90deg, rgba(237,195,62,.15), #edc33e), repeating-conic-gradient(#7c7c7c 0 25%, #b8b8b8 0 50%) 0 0 / 14px 14px; }
.m { position: absolute; top: 0; bottom: 0; width: 0; }
.m::before, .m::after { content: ""; position: absolute; left: -4px; border: 4px solid transparent; }
.m::before { top: -1px; border-top: 4px solid #fff; border-bottom: 0; }
.m::after { bottom: -1px; border-bottom: 4px solid #fff; border-top: 0; }
.num { width: 50px; height: 22px; margin-left: 3px; background: #2b2b2b; border-radius: 3px; display: flex; align-items: center; padding-left: 4px; flex: none; }
.nv { flex: 1; color: #c8c8c8; }
.spacer { flex: 1; }
.rgba { display: flex; align-items: center; height: 22px; padding: 0 9px 0 3px; flex: none; }
.rgba svg { width: 13px; height: 13px; flex: none; }
.s2 { margin-left: 8px; }
.rl-t { margin-left: auto; margin-right: 4px; color: #bbb; }
.rgba-f { width: 50px; height: 22px; background: #282828; border-radius: 3px; display: flex; align-items: center; padding-left: 5px; }
.blend { display: flex; align-items: center; justify-content: flex-end; height: 23px; margin-top: 4px; padding-right: 7px; border-top: 1px solid #3a3a3a; gap: 4px; flex: none; }
.blend-d { width: 74px; height: 21px; background: #2e2e2e; border: 1px solid #272727; border-radius: 3px; display: flex; align-items: center; justify-content: space-between; padding: 0 8px 0 6px; }
.meter { display: flex; align-items: center; height: 20px; padding: 0 6px 0 3px; flex: none; }
.mbar { width: 155px; height: 17px; background: #212121; display: flex; align-items: center; padding-left: 2px; flex: none; color: #c8c8c8; }
.mbar.blue { background: #2657a8; color: #ddd; }
.mv { margin-left: 4px; flex: none; color: #c8c8c8; }
.meter .mv + .pm { margin-left: auto; }

.palette { height: 23px; flex: none; display: flex; align-items: stretch; }
.none-sw { width: 24px; background: #f4f4f4; border: 1px solid #999; }
.none-sw svg { width: 100%; height: 100%; }
.big { width: 24px; }
.k { background: #000; }
.g5 { background: #808080; }
.w { background: #fff; }
.swatches { width: 858px; display: grid; grid-template-columns: repeat(50, 15.96px) repeat(4, 15px); grid-template-rows: repeat(2, 1fr); gap: 1px 0; }
.swatches i { display: block; position: relative; }
.swatches i.cur::after { content: ""; position: absolute; left: 6px; top: 4px; width: 3px; height: 3px; background: #333; border-radius: 50%; }
.pal-ctl { flex: 1; display: flex; align-items: center; padding-left: 4px; gap: 6px; }
.up-a, .down-a { width: 7px; height: 7px; border-left: 1.2px solid #666; border-top: 1.2px solid #666; transform: rotate(45deg); margin-top: 4px; }
.down-a { border-color: #ddd; transform: rotate(225deg); margin-top: -5px; }
.burger { width: 10px; height: 9px; border-top: 1.5px solid #ddd; border-bottom: 1.5px solid #ddd; position: relative; }
.burger::after { content: ""; position: absolute; left: 0; right: 0; top: 2.5px; height: 1.5px; background: #ddd; }

.status { height: 25px; flex: none; display: flex; align-items: center; font-size: 8.6px; white-space: nowrap; }
.fs { width: 105px; flex: none; }
.fs-row { display: flex; align-items: center; height: 12.5px; }
.fs-l { width: 27px; text-align: right; }
.fs-sw { width: 35px; height: 11px; margin-left: 13px; background: #f9cd47; border-radius: 1px; }
.fs-row em { margin-left: 21px; width: 36px; }
.o-l { width: 9px; margin-left: 5px; }
.o-f { width: 50px; height: 24px; margin-left: 4px; background: #2a2a2a; border-radius: 3px; display: flex; align-items: center; padding-left: 4px; flex: none; }
.layerbar { width: 2px; height: 9px; background: #2f66c0; margin-left: 9px; }
.layer { margin-left: 5px; width: 40px; }
.st-ic { width: 11px; height: 11px; flex: none; }
.eye { margin-left: 2px; }
.lk { margin-left: 14px; }
.msg { margin-left: 12px; width: 420px; font-size: 8.4px; }
.msg b { color: #e8e8e8; }
.nav { width: 70px; margin-left: 27px; display: flex; align-items: center; gap: 18px; }
.nl { border: 4px solid transparent; border-right: 4px solid #888; border-left: 0; }
.nd { border: 5px solid transparent; border-top: 4px solid #888; border-bottom: 0; }
.nr { border: 4px solid transparent; border-left: 4px solid #888; border-right: 0; }
.xy { display: grid; grid-template-columns: 19px 28px; line-height: 9.5px; width: 48px; }
.z-l { width: 10px; }
.z-f { width: 59px; height: 22px; background: #2a2a2a; border-radius: 3px; display: flex; align-items: center; padding-left: 7px; flex: none; }
.r-l { margin-left: 6px; width: 12px; }
.r-f { width: 62px; height: 22px; background: #2a2a2a; border-radius: 3px; display: flex; align-items: center; padding-left: 11px; flex: none; }
```

FILE: script.js
```js
(function () {
  var upper = [
    "#1a1a1a","#2e2e2e","#4a4a4a","#6a6a6a","#999999","#b0b0b0","#cccccc","#e6e6e6","#ececec","#f2f2f2","#f9f9f9",
    "#800000","#ff2a1a","#808000","#ffff33","#008000","#55ff33","#008080","#55ffff","#000080","#0000ff","#800080","#ff22ff",
    "#2b0000","#550000","#800000","#aa1100","#d42a10","#ff2a1a","#ff3a3a","#ff5f5f","#ff8080","#ffaaaa","#ffd5d5",
    "#280b0b","#501616","#782121","#a02c2c","#c83737","#d35f5f","#de8787","#e9afaf","#f4d7d7",
    "#241c1c","#483737","#6c5353","#916f6f","#ac9393","#c8b7b7","#e3dbdb",
    "#2b1100","#6b2e08","#a84410","#c4561a"
  ];
  var lower = [
    "#cc6420","#f37a2e","#f08a45","#f09a5e","#f4b080","#f8cbaa","#f6e0cf",
    "#321a0c","#50301a","#784828","#a06035","#c07d4c","#d09a70","#d8b08e","#e6c4a8","#f0e0d0",
    "#241f1c","#483e37","#6c5d53","#917c6f","#ac9d93","#c8beb7","#e3dedb",
    "#2b2200","#554400","#806600","#aa8800","#d4aa2a","#f9cc33","#ffd42a","#ffdd55","#ffe680","#ffeeaa","#fff6d5",
    "#28220b","#504416","#786721","#a0892c","#c8ab37","#d3bc5f","#decd87","#e9ddaf","#f4eed7",
    "#24221c","#484537","#6c6753","#918a6f","#aca793","#c8c4b7","#e3e2db",
    "#222b00","#445500","#668000","#a0b82a"
  ];
  var host = document.getElementById("swatches");
  upper.concat(lower).forEach(function (color, i) {
    var cell = document.createElement("i");
    cell.style.background = color;
    if (i === 54 + 28) { cell.className = "cur"; }
    host.appendChild(cell);
  });
})();
```
